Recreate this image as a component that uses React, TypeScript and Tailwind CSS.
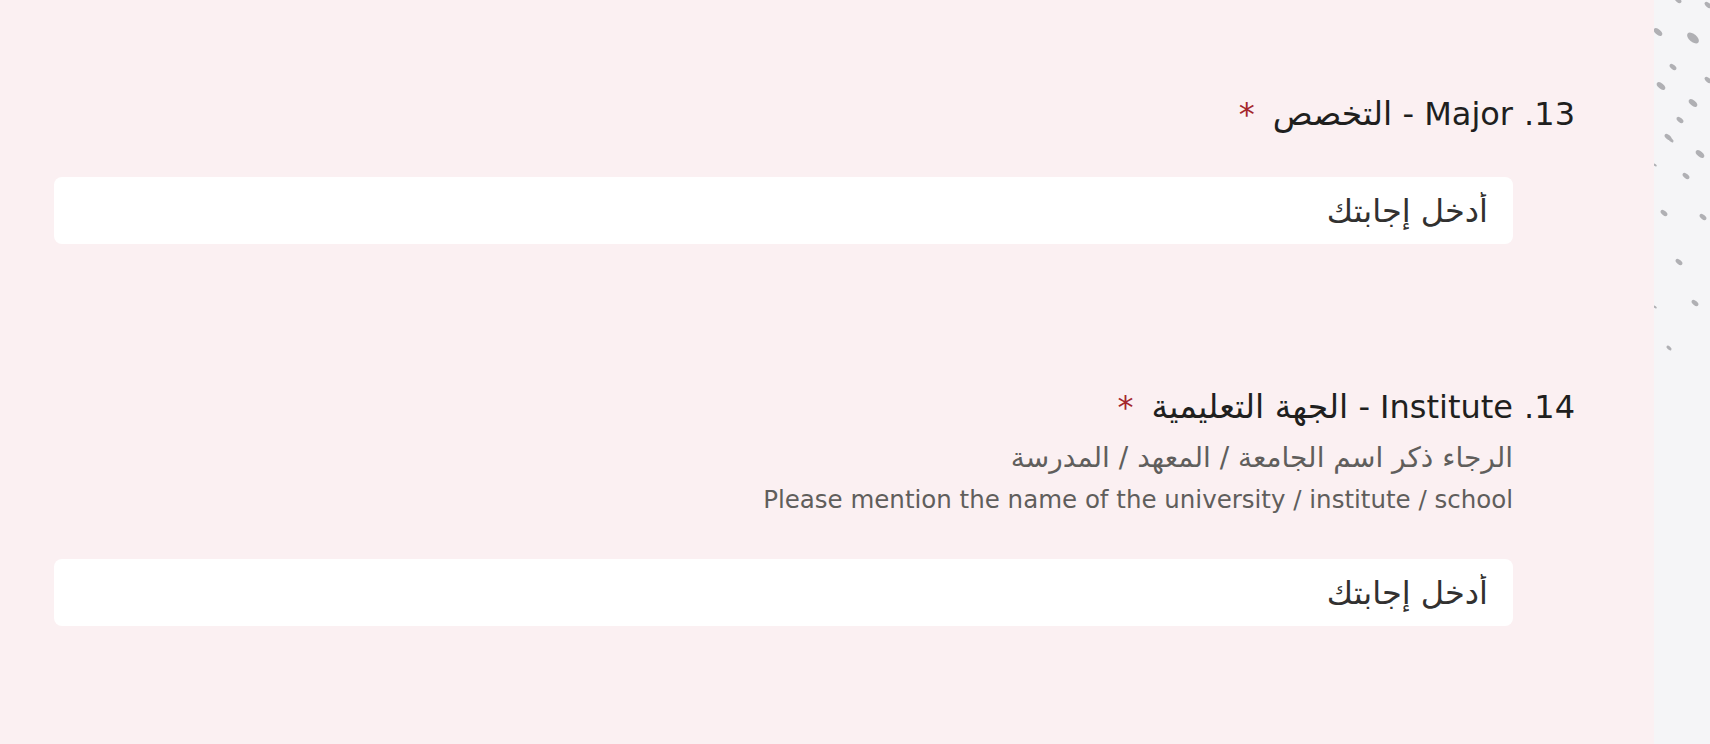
import React from 'react';

const font = { fontFamily: '"DejaVu Sans", Tahoma, sans-serif' };

type Dot = [number, number, number];

// grey flecks on the right strip (x relative to strip, y absolute)
const dots: Dot[] = [
  [24, 0, 4], [54, 5, 4], [4, 32, 5], [39, 38, 7], [19, 67, 4],
  [54, 80, 4], [7, 86, 5], [39, 103, 5], [26, 120, 4], [14, 137, 4],
  [17, 140, 3], [46, 154, 5], [32, 176, 4], [1, 165, 2], [10, 213, 4],
  [49, 217, 4], [25, 262, 4], [1, 307, 2], [41, 303, 4], [15, 348, 3],
];

function Question({
  num,
  latin,
  arabic,
  desc,
}: {
  num: string;
  latin: string;
  arabic: string;
  desc?: { ar: string; en: string };
}) {
  return (
    <div className="flex" dir="rtl">
      <div className="w-[62px] shrink-0 text-[32px] leading-[40px] text-[#201f1e]">{num}</div>
      <div className="flex-1">
        <div className="text-[32px] leading-[40px] text-[#201f1e]">
          {latin} - <span className="text-[33px]">{arabic}</span>
          <span className="mr-[18px] text-[#a4262c]">*</span>
        </div>
        {desc ? (
          <div className="mt-[10px] leading-[42px] text-[#605e5c]">
            <div className="text-[28px]">{desc.ar}</div>
            <div className="text-[24.5px]">{desc.en}</div>
          </div>
        ) : null}
        <input
          readOnly
          placeholder="أدخل إجابتك"
          className={`${desc ? 'mt-[38px]' : 'mt-[43px]'} block h-[67px] w-full rounded-[8px] bg-white px-[25px] text-[32px] text-[#323130] outline-none placeholder:text-[#323130]`}
          style={font}
        />
      </div>
    </div>
  );
}

export default function App() {
  return (
    <div className="flex h-screen w-full overflow-hidden" style={font}>
      <main className="flex-1 bg-[#fbf0f2] pl-[54px] pr-[79px] pt-[94px]">
        <Question num="13." latin="Major" arabic="التخصص" />
        <div className="h-[143px]" />
        <Question
          num="14."
          latin="Institute"
          arabic="الجهة التعليمية"
          desc={{
            ar: 'الرجاء ذكر اسم الجامعة / المعهد / المدرسة',
            en: 'Please mention the name of the university / institute / school',
          }}
        />
      </main>
      <aside className="w-[56px] shrink-0 bg-[#f5f5f7]">
        <svg width="56" height="400" viewBox="0 0 56 400">
          {dots.map(([x, y, r], i) => (
            <ellipse
              key={i}
              cx={x}
              cy={y}
              rx={r}
              ry={r * 0.55}
              transform={`rotate(40 ${x} ${y})`}
              fill="#b0b0b4"
            />
          ))}
        </svg>
      </aside>
    </div>
  );
}
